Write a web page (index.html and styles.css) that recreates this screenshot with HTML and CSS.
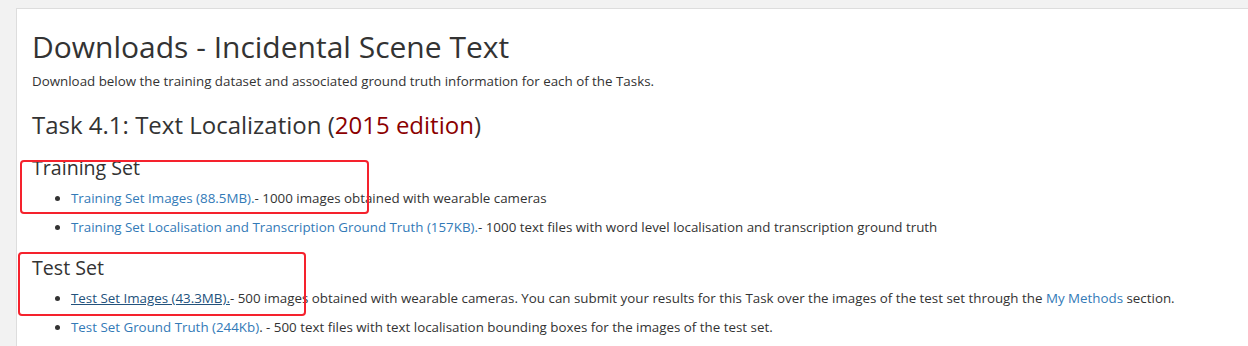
FILE: index.html
```html
<!DOCTYPE html>
<html lang="en">

<head>
  <meta charset="UTF-8">
  <meta name="viewport" content="width=device-width, initial-scale=1.0">
  <title>Downloads - Incidental Scene Text</title>
  <link rel="stylesheet" href="styles.css">
</head>

<body>
  <div class="panel">
    <h1>Downloads - Incidental Scene Text</h1>
    <p class="intro">Download below the training dataset and associated ground truth information for each of the Tasks.</p>

    <h2>Task 4.1: Text Localization (<span class="edition">2015 edition</span>)</h2>

    <!-- Training -->
    <h3 class="first">Training Set</h3>
    <ul>
      <li><a href="#">Training Set Images (88.5MB).</a>- 1000 images obtained with wearable cameras</li>
      <li><a href="#">Training Set Localisation and Transcription Ground Truth (157KB).</a>- 1000 text files with word level localisation and transcription ground truth</li>
    </ul>

    <!-- Test -->
    <h3>Test Set</h3>
    <ul>
      <li><a href="#" class="hover">Test Set Images (43.3MB).</a>- 500 images obtained with wearable cameras. You can submit your results for this Task over the images of the test set through the <a href="#">My Methods</a> section.</li>
      <li><a href="#">Test Set Ground Truth (244Kb)</a>. - 500 text files with text localisation bounding boxes for the images of the test set.</li>
    </ul>

    <div class="mark mark-train"></div>
    <div class="mark mark-test"></div>
  </div>
</body>

</html>
```

FILE: styles.css
```css
body {
  font-family: "Open Sans", sans-serif;
  background-color: #f2f2f2;
  color: #333;
  margin: 0;
  padding: 8px 0 0 16px;
  overflow: hidden;
}

.panel {
  position: relative;
  width: 1260px;
  min-height: 400px;
  background: #fff;
  border: 1px solid #ddd;
  padding: 0 15px;
}

h1 {
  font-size: 30px;
  font-weight: 400;
  margin: 20px 0 0;
  line-height: 36px;
}

.intro {
  font-size: 13.35px;
  margin: 7px 0 0;
  line-height: 18px;
}

h2 {
  font-size: 24px;
  font-weight: 400;
  margin: 20px 0 0;
  line-height: 30px;
}

.edition {
  color: #8b0000;
}

h3 {
  font-size: 19.6px;
  font-weight: 400;
  margin: 15px 0 0;
  line-height: 22px;
}

h3.first {
  margin-top: 17px;
}

ul {
  margin: 5px 0 0;
  padding-left: 39px;
  font-size: 13.35px;
}

ul li {
  line-height: 29px;
}

a {
  color: #337ab7;
  text-decoration: none;
}

a.hover {
  color: #23527c;
  text-decoration: underline;
}

.mark {
  position: absolute;
  border: 2px solid #f5222d;
  border-radius: 4px;
}

.mark-train {
  left: 3px;
  top: 151px;
  width: 345px;
  height: 50px;
}

.mark-test {
  left: 1px;
  top: 243px;
  width: 284px;
  height: 60px;
}
```
